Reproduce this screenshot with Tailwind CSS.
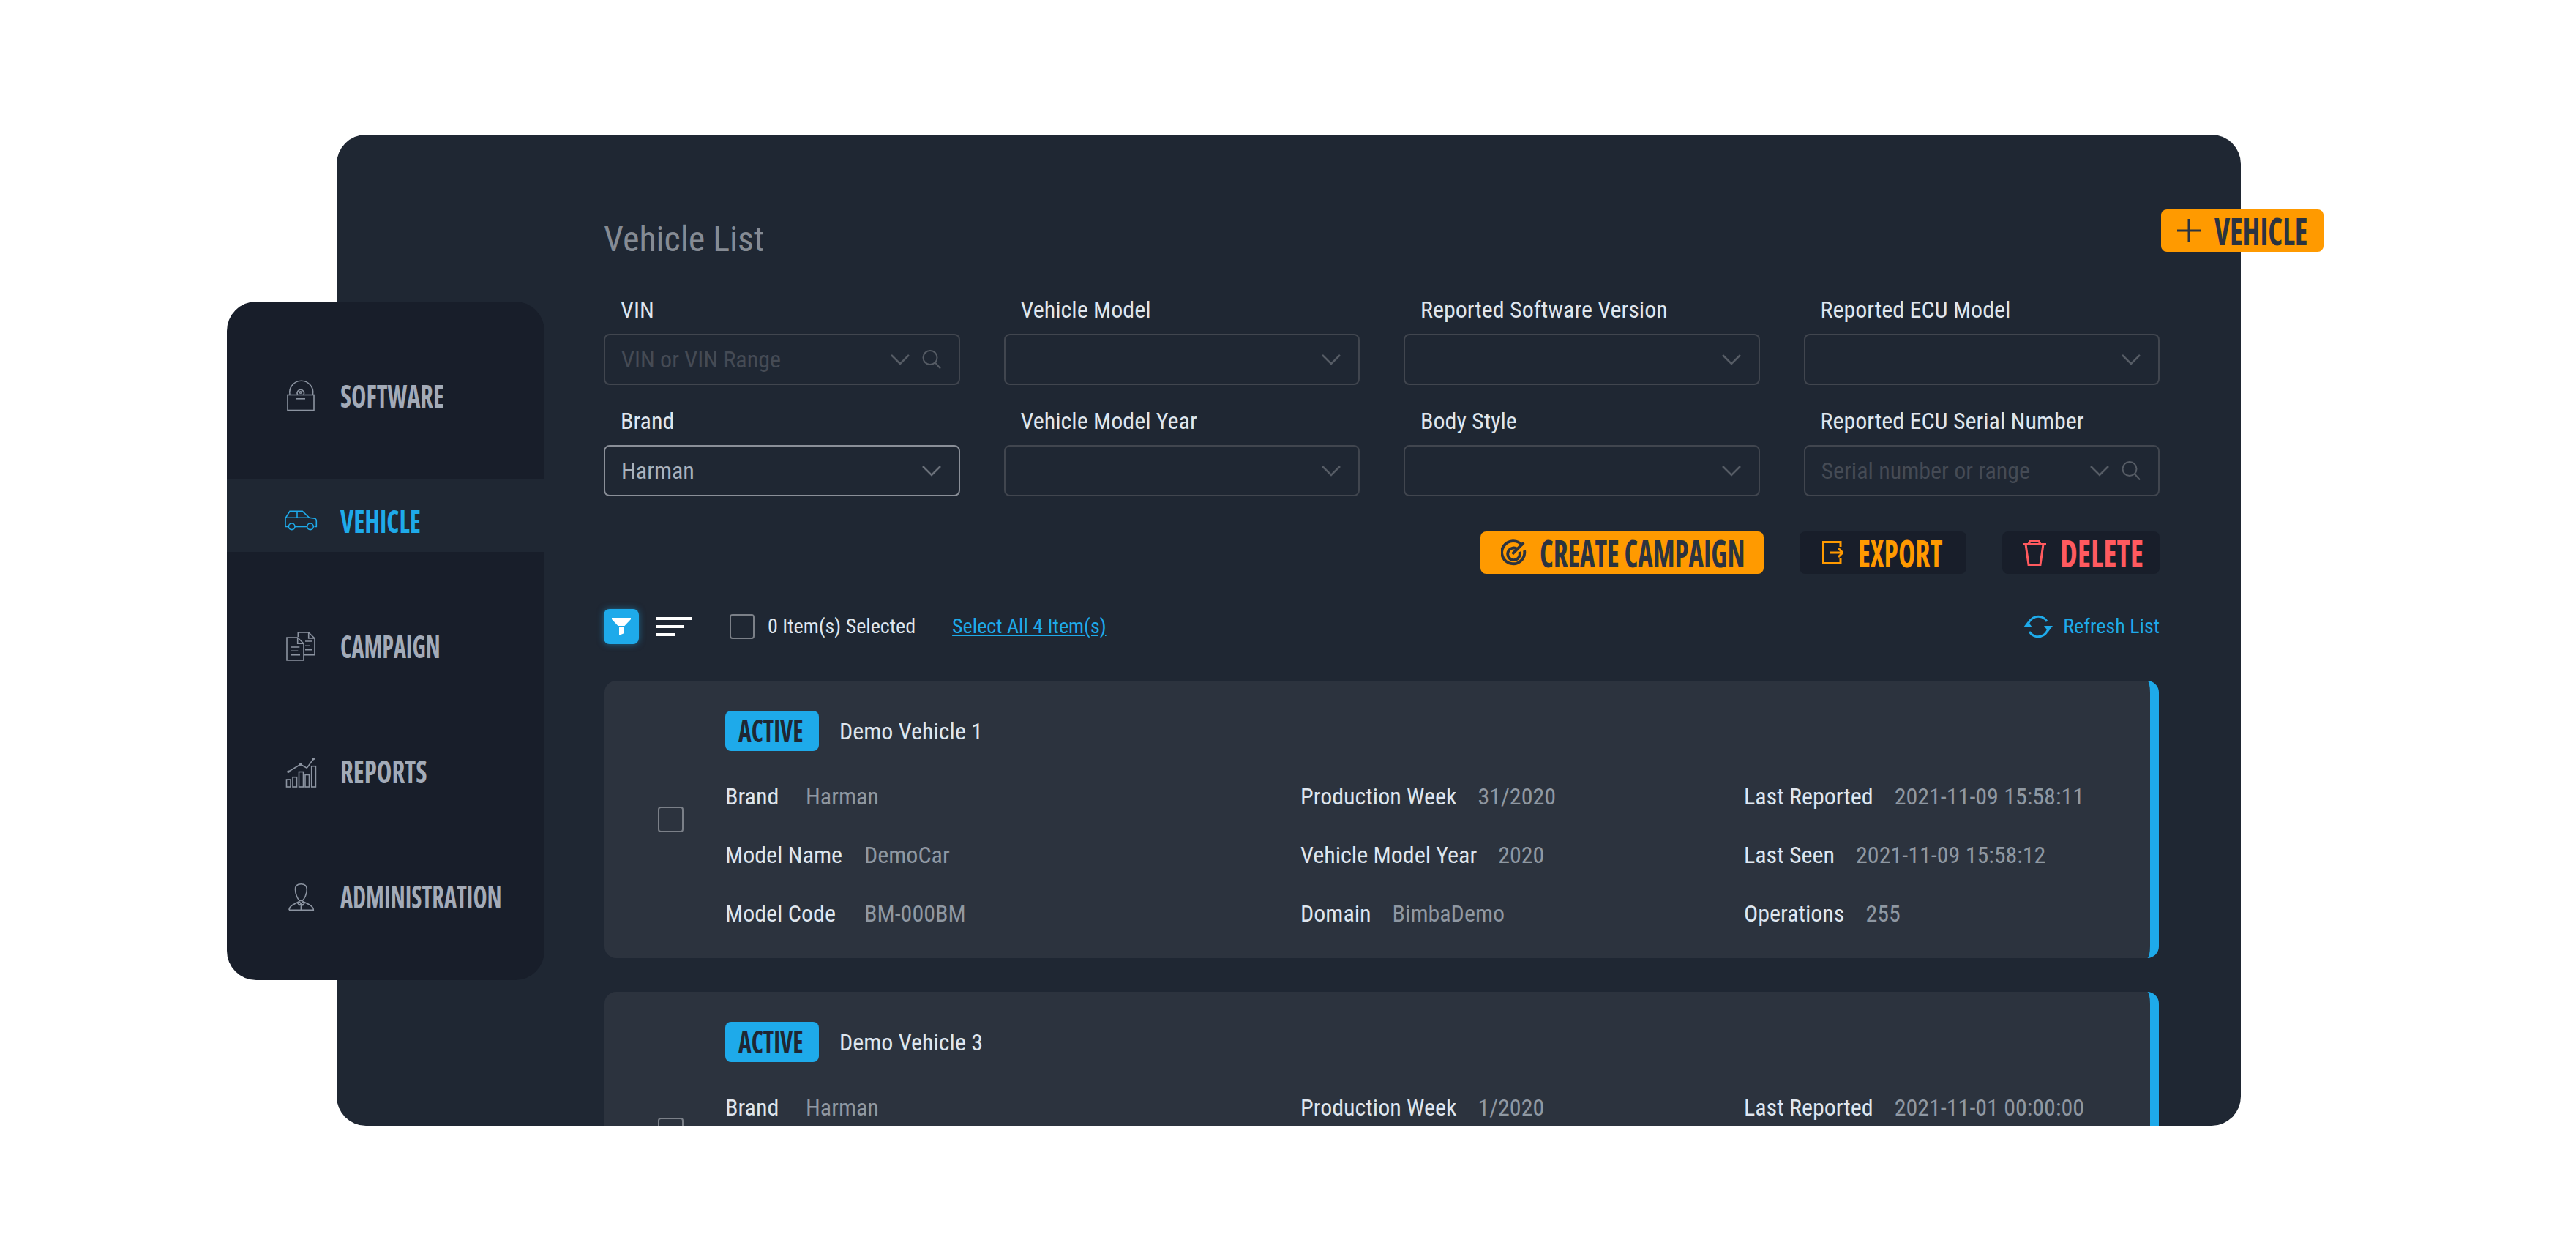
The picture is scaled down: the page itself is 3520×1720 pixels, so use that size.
<!DOCTYPE html>
<html lang="en">
<head>
<meta charset="UTF-8" />
<title>Vehicle List</title>
<script src="https://cdn.jsdelivr.net/npm/@tailwindcss/browser@4"></script>
</head>
<body class="bg-white font-['Roboto',sans-serif] font-stretch-[75%]">
<div class="relative w-[3520px] h-[1720px] overflow-hidden pt-[184px] pl-[460px]">

  <!-- Main panel -->
  <main class="w-[2602px] h-[1354px] bg-[#1f2733] rounded-[40px] overflow-hidden pl-[365px] pt-[115px]">
    <div class="w-[2126px]">
      <h1 class="text-[48px] leading-[56px] text-[#858b94]">Vehicle List</h1>

      <!-- Filters -->
      <section class="grid grid-cols-4 gap-x-[60px] mt-[47px]">
        <div>
          <div class="h-[54px] pl-[23px] text-[32px] leading-[42px] text-[#dfe6ee]">VIN</div>
          <div class="h-[70px] border-2 border-[#41464f] rounded-[8px] flex items-center pl-[22px] pr-[24px] text-[32px] text-[#454b55]">
            <span class="flex-1">VIN or VIN Range</span>
            <svg class="w-[26px] h-[15px] mr-[17px]" viewBox="0 0 26 15" fill="none" stroke="#565c65" stroke-width="2.5"><path d="M1 1l12 12L25 1"/></svg>
            <svg class="w-[26px] h-[26px]" viewBox="0 0 26 26" fill="none" stroke="#565c65" stroke-width="2"><circle cx="11" cy="10.5" r="9.5"/><path d="M18 17.5l7 8"/></svg>
          </div>
        </div>
        <div>
          <div class="h-[54px] pl-[23px] text-[32px] leading-[42px] text-[#dfe6ee]">Vehicle Model</div>
          <div class="h-[70px] border-2 border-[#41464f] rounded-[8px] flex items-center justify-end pr-[24px]">
            <svg class="w-[26px] h-[15px]" viewBox="0 0 26 15" fill="none" stroke="#565c65" stroke-width="2.5"><path d="M1 1l12 12L25 1"/></svg>
          </div>
        </div>
        <div>
          <div class="h-[54px] pl-[23px] text-[32px] leading-[42px] text-[#dfe6ee]">Reported Software Version</div>
          <div class="h-[70px] border-2 border-[#41464f] rounded-[8px] flex items-center justify-end pr-[24px]">
            <svg class="w-[26px] h-[15px]" viewBox="0 0 26 15" fill="none" stroke="#565c65" stroke-width="2.5"><path d="M1 1l12 12L25 1"/></svg>
          </div>
        </div>
        <div>
          <div class="h-[54px] pl-[23px] text-[32px] leading-[42px] text-[#dfe6ee]">Reported ECU Model</div>
          <div class="h-[70px] border-2 border-[#41464f] rounded-[8px] flex items-center justify-end pr-[24px]">
            <svg class="w-[26px] h-[15px]" viewBox="0 0 26 15" fill="none" stroke="#565c65" stroke-width="2.5"><path d="M1 1l12 12L25 1"/></svg>
          </div>
        </div>
        <div class="mt-[28px]">
          <div class="h-[54px] pl-[23px] text-[32px] leading-[42px] text-[#dfe6ee]">Brand</div>
          <div class="h-[70px] border-2 border-[#8a8f98] rounded-[8px] flex items-center pl-[22px] pr-[24px] text-[32px] text-[#a9b2bd]">
            <span class="flex-1">Harman</span>
            <svg class="w-[26px] h-[15px]" viewBox="0 0 26 15" fill="none" stroke="#6a7079" stroke-width="2.5"><path d="M1 1l12 12L25 1"/></svg>
          </div>
        </div>
        <div class="mt-[28px]">
          <div class="h-[54px] pl-[23px] text-[32px] leading-[42px] text-[#dfe6ee]">Vehicle Model Year</div>
          <div class="h-[70px] border-2 border-[#41464f] rounded-[8px] flex items-center justify-end pr-[24px]">
            <svg class="w-[26px] h-[15px]" viewBox="0 0 26 15" fill="none" stroke="#565c65" stroke-width="2.5"><path d="M1 1l12 12L25 1"/></svg>
          </div>
        </div>
        <div class="mt-[28px]">
          <div class="h-[54px] pl-[23px] text-[32px] leading-[42px] text-[#dfe6ee]">Body Style</div>
          <div class="h-[70px] border-2 border-[#41464f] rounded-[8px] flex items-center justify-end pr-[24px]">
            <svg class="w-[26px] h-[15px]" viewBox="0 0 26 15" fill="none" stroke="#565c65" stroke-width="2.5"><path d="M1 1l12 12L25 1"/></svg>
          </div>
        </div>
        <div class="mt-[28px]">
          <div class="h-[54px] pl-[23px] text-[32px] leading-[42px] text-[#dfe6ee]">Reported ECU Serial Number</div>
          <div class="h-[70px] border-2 border-[#41464f] rounded-[8px] flex items-center pl-[22px] pr-[24px] text-[32px] text-[#454b55]">
            <span class="flex-1">Serial number or range</span>
            <svg class="w-[26px] h-[15px] mr-[17px]" viewBox="0 0 26 15" fill="none" stroke="#565c65" stroke-width="2.5"><path d="M1 1l12 12L25 1"/></svg>
            <svg class="w-[26px] h-[26px]" viewBox="0 0 26 26" fill="none" stroke="#565c65" stroke-width="2"><circle cx="11" cy="10.5" r="9.5"/><path d="M18 17.5l7 8"/></svg>
          </div>
        </div>
      </section>

      <!-- Actions -->
      <section class="flex justify-end gap-[49px] mt-[48px] font-['Open_Sans',sans-serif] font-bold text-[52px] leading-none">
        <button class="w-[387px] h-[58px] bg-[#ff9a00] rounded-[8px] flex items-center pl-[28px] text-[#2b3340]">
          <svg class="w-[35px] h-[36px] mr-[20px] shrink-0" viewBox="0 0 36 36" fill="none" stroke="#2b3340" stroke-width="4"><path d="M30 8A16 16 0 1 0 33 15"/><path d="M23 13A8.5 8.5 0 1 0 26 17"/><path d="M16 20L32 4"/></svg>
          <span class="block w-[279px] -ml-[2px] whitespace-nowrap text-left origin-left scale-x-[0.745]">CREATE CAMPAIGN</span>
        </button>
        <button class="w-[228px] h-[58px] bg-[#181e2a] rounded-[8px] flex items-center pl-[31px] text-[#ff9a00]">
          <svg class="w-[29px] h-[32px] mr-[22px] shrink-0" viewBox="0 0 29 32" fill="none" stroke="#ff9a00" stroke-width="3"><path d="M25 8V1.5H1.500v29H25V24"/><path d="M11 16h17M22 10l6 6-6 6"/></svg>
          <span class="block w-[114px] -ml-[2px] whitespace-nowrap text-left origin-left scale-x-[0.76]">EXPORT</span>
        </button>
        <button class="w-[215px] h-[58px] bg-[#181e2a] rounded-[8px] flex items-center pl-[28px] text-[#ff5a5f]">
          <svg class="w-[32px] h-[35px] mr-[21px] shrink-0" viewBox="0 0 32 35" fill="none" stroke="#ff5a5f" stroke-width="3"><path d="M0 5.500h32M4 5.500l4 28h16l4-28"/><path d="M8 5l2-3.500h12L24 5"/></svg>
          <span class="block w-[110px] -ml-[2px] whitespace-nowrap text-left origin-left scale-x-[0.82]">DELETE</span>
        </button>
      </section>

      <!-- Toolbar -->
      <section class="flex items-center h-[48px] mt-[48px] text-[28px]">
        <div class="w-[48px] h-[48px] rounded-[8px] bg-[#1eaaea] shadow-[0_0_10px_#1eaaea80] flex items-center justify-center">
          <svg class="w-[26px] h-[24px]" viewBox="0 0 26 24" fill="white"><path d="M0 0h26v2l-8.500 9h-9L0 2z"/><path d="M10 13h7v8l-7 3z"/></svg>
        </div>
        <div class="w-[48px] ml-[24px] flex flex-col gap-[7px]">
          <div class="h-[4px] w-[48px] bg-white"></div>
          <div class="h-[4px] w-[37px] bg-white"></div>
          <div class="h-[4px] w-[26px] bg-white"></div>
        </div>
        <div class="w-[34px] h-[34px] ml-[52px] border-2 border-[#7b8088] rounded-[4px]"></div>
        <span class="ml-[18px] text-[#dfe6ee]">0 Item(s) Selected</span>
        <a class="ml-[50px] text-[#1eaaea] underline">Select All 4 Item(s)</a>
        <a class="ml-auto flex items-center gap-[14px] text-[#1eaaea]">
          <svg class="w-[40px] h-[34px]" viewBox="0 0 40 34" fill="none" stroke="#1eaaea" stroke-width="3"><path d="M6 17A14 14 0 0 1 32 10"/><path d="M34 17A14 14 0 0 1 8 24"/><path d="M0 18h12L6 10zM28 16h12l-6 8z" fill="#1eaaea" stroke="none"/></svg>
          Refresh List
        </a>
      </section>

      <!-- Vehicle cards -->
      <section class="flex flex-col gap-[46px] mt-[50px] ml-[1px]">
        <article class="h-[379px] w-[2124px] bg-[#2c333e] rounded-[16px] border-r-[12px] border-[#1eaaea] flex pl-[73px]">
          <div class="w-[35px] h-[35px] mt-[172px] border-2 border-[#7b8088] rounded-[4px] shrink-0"></div>
          <div class="ml-[57px] pt-[41px] flex-1">
            <div class="flex items-center h-[55px]">
              <span class="w-[128px] h-[55px] bg-[#1eaaea] rounded-[8px] flex items-center pl-[18px] font-['Open_Sans',sans-serif] font-bold text-[43px] text-[#1f2733]"><span class="block w-[91px] whitespace-nowrap origin-left scale-x-[0.78]">ACTIVE</span></span>
              <span class="ml-[28px] text-[32px] text-[#dfe6ee]">Demo Vehicle 1</span>
            </div>
            <div class="grid grid-cols-[786px_606px_1fr] auto-rows-[80px] mt-[22px] text-[32px] items-center">
              <div class="flex"><span class="w-[110px] text-[#dfe6ee]">Brand</span><span class="text-[#8f98a2]">Harman</span></div>
              <div class="flex gap-[29px]"><span class="text-[#dfe6ee]">Production Week</span><span class="text-[#8f98a2]">31/2020</span></div>
              <div class="flex gap-[29px]"><span class="text-[#dfe6ee]">Last Reported</span><span class="text-[#8f98a2]">2021-11-09 15:58:11</span></div>
              <div class="flex"><span class="w-[190px] text-[#dfe6ee]">Model Name</span><span class="text-[#8f98a2]">DemoCar</span></div>
              <div class="flex gap-[29px]"><span class="text-[#dfe6ee]">Vehicle Model Year</span><span class="text-[#8f98a2]">2020</span></div>
              <div class="flex gap-[29px]"><span class="text-[#dfe6ee]">Last Seen</span><span class="text-[#8f98a2]">2021-11-09 15:58:12</span></div>
              <div class="flex"><span class="w-[190px] text-[#dfe6ee]">Model Code</span><span class="text-[#8f98a2]">BM-000BM</span></div>
              <div class="flex gap-[29px]"><span class="text-[#dfe6ee]">Domain</span><span class="text-[#8f98a2]">BimbaDemo</span></div>
              <div class="flex gap-[29px]"><span class="text-[#dfe6ee]">Operations</span><span class="text-[#8f98a2]">255</span></div>
            </div>
          </div>
        </article>
        <article class="h-[379px] w-[2124px] bg-[#2c333e] rounded-[16px] border-r-[12px] border-[#1eaaea] flex pl-[73px]">
          <div class="w-[35px] h-[35px] mt-[172px] border-2 border-[#7b8088] rounded-[4px] shrink-0"></div>
          <div class="ml-[57px] pt-[41px] flex-1">
            <div class="flex items-center h-[55px]">
              <span class="w-[128px] h-[55px] bg-[#1eaaea] rounded-[8px] flex items-center pl-[18px] font-['Open_Sans',sans-serif] font-bold text-[43px] text-[#1f2733]"><span class="block w-[91px] whitespace-nowrap origin-left scale-x-[0.78]">ACTIVE</span></span>
              <span class="ml-[28px] text-[32px] text-[#dfe6ee]">Demo Vehicle 3</span>
            </div>
            <div class="grid grid-cols-[786px_606px_1fr] auto-rows-[80px] mt-[22px] text-[32px] items-center">
              <div class="flex"><span class="w-[110px] text-[#dfe6ee]">Brand</span><span class="text-[#8f98a2]">Harman</span></div>
              <div class="flex gap-[29px]"><span class="text-[#dfe6ee]">Production Week</span><span class="text-[#8f98a2]">1/2020</span></div>
              <div class="flex gap-[29px]"><span class="text-[#dfe6ee]">Last Reported</span><span class="text-[#8f98a2]">2021-11-01 00:00:00</span></div>
            </div>
          </div>
        </article>
      </section>
    </div>
  </main>

  <!-- Add button overhanging the panel edge -->
  <button class="absolute left-[2953px] top-[286px] w-[222px] h-[58px] bg-[#ff9a00] rounded-[8px] flex items-center pl-[22px] gap-[21px] font-['Open_Sans',sans-serif] font-bold text-[52px] leading-none text-[#2b3340]">
    <svg class="w-[32px] h-[32px] shrink-0" viewBox="0 0 32 32" stroke="#2b3340" stroke-width="3"><path d="M0 16h32M16 0v32"/></svg>
    <span class="block w-[125px] -ml-[2px] whitespace-nowrap text-left origin-left scale-x-[0.79]">VEHICLE</span>
  </button>

  <!-- Sidebar overlapping the panel -->
  <nav class="absolute left-[310px] top-[412px] w-[434px] h-[927px] bg-[#181e2a] rounded-[40px] flex flex-col gap-[72px] pt-[72px] font-['Open_Sans',sans-serif] font-bold text-[42px] text-[#a3abb8]">
    <a class="h-[99px] pt-[15px] pl-[70px] flex items-center">
      <svg class="w-[70px] h-[70px] shrink-0" viewBox="0 6 70 70" fill="none" stroke="#8c94a1" stroke-width="1.600">
        <path d="M16 39A16 16 0 1 1 47.500 39"/><rect x="13" y="39.500" width="36" height="21"/>
        <path d="M26.500 39A4.700 4.700 0 1 1 35 39"/><circle cx="30.700" cy="36" r="1.300"/><path d="M25 44.800h12"/>
      </svg>
      <span class="block ml-[15px] -mt-[2px] whitespace-nowrap origin-left scale-x-[0.82]">SOFTWARE</span>
    </a>
    <a class="h-[99px] pt-[15px] pl-[70px] flex items-center bg-[#1f2733] text-[#1eaaea]">
      <svg class="w-[70px] h-[70px] shrink-0" viewBox="0 -3 70 70" fill="none" stroke="#1eaaea" stroke-width="1.600">
        <path d="M14.500 39.500H10V28l6-9.700h17.300l9.400 9 7.300 1q2.300.7 2.300 3.700v7.500h-2.800"/><path d="M23 39.500h16.500"/>
        <path d="M10 27.300h32.700M26 18.300v9"/><circle cx="18.700" cy="39.300" r="4.300"/><circle cx="44" cy="39.300" r="4.300"/>
      </svg>
      <span class="block ml-[15px] -mt-[2px] whitespace-nowrap origin-left scale-x-[0.845]">VEHICLE</span>
    </a>
    <a class="h-[99px] pt-[15px] pl-[70px] flex items-center">
      <svg class="w-[70px] h-[70px] shrink-0" viewBox="0 -2 70 70" fill="none" stroke="#8c94a1" stroke-width="1.600">
        <path d="M12 21h14.700l8.300 8.300V52H12z"/><path d="M26.700 21v8.300H35"/><path d="M17.300 34h12M17.300 39.300h10M17.300 44.700H30"/>
        <path d="M27.300 20v-6h14.400l8.300 8v22.700H35"/><path d="M41.700 14v8H50"/><path d="M37 26h9M37 32.300h6M37 37.700h9"/>
      </svg>
      <span class="block ml-[15px] -mt-[2px] whitespace-nowrap origin-left scale-x-[0.765]">CAMPAIGN</span>
    </a>
    <a class="h-[99px] pt-[15px] pl-[70px] flex items-center">
      <svg class="w-[70px] h-[70px] shrink-0" viewBox="0 -2 70 70" fill="none" stroke="#8c94a1" stroke-width="1.600">
        <rect x="11.500" y="44" width="5.500" height="10"/><rect x="20" y="40.700" width="5.500" height="13.300"/><rect x="28.500" y="33.500" width="6" height="20.500"/><rect x="37" y="37.500" width="5.500" height="16.500"/><rect x="45.700" y="25.700" width="5.700" height="28.300"/>
        <path d="M14 33.300l16.700-10 8.600 5 9-12.600"/><circle cx="14" cy="33.300" r="1" fill="#8c94a1"/><circle cx="30.700" cy="23.300" r="1" fill="#8c94a1"/><circle cx="48.300" cy="15.700" r="1" fill="#8c94a1"/>
      </svg>
      <span class="block ml-[15px] -mt-[2px] whitespace-nowrap origin-left scale-x-[0.83]">REPORTS</span>
    </a>
    <a class="h-[99px] pt-[15px] pl-[70px] flex items-center">
      <svg class="w-[70px] h-[70px] shrink-0" viewBox="0 -1 70 70" fill="none" stroke="#8c94a1" stroke-width="1.600">
        <path d="M23.500 24c0-5.500 3.500-7.300 7.800-7.300s8 1.800 8 7.300c0 6.500-3.300 13-6 15.500h-4c-2.700-2.500-5.800-9-5.800-15.500z"/>
        <path d="M15 52.300h33.300c0-5.500-6-7.800-14.500-11.800M15 52.300c0-5.500 6-7.800 14-11.800"/><path d="M29 41l2.400 2.400L29 45.500l-2-2.500zM33.800 41l-2.400 2.400 2.400 2.100 2-2.500zM31.400 44v8"/>
      </svg>
      <span class="block ml-[15px] -mt-[2px] whitespace-nowrap origin-left scale-x-[0.77]">ADMINISTRATION</span>
    </a>
  </nav>
</div>
</body>
</html>
